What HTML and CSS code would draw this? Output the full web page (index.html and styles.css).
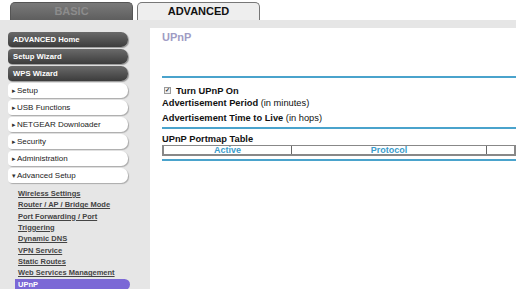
FILE: index.html
```html
<!DOCTYPE html>
<html>
<head>
<meta charset="utf-8">
<link rel="stylesheet" href="styles.css">
</head>
<body>
<div class="tabs">
  <div class="tab tab-basic">BASIC</div>
  <div class="tab tab-adv">ADVANCED</div>
</div>
<div class="main">
  <nav class="side">
    <div class="btn dark">ADVANCED Home</div>
    <div class="btn dark">Setup Wizard</div>
    <div class="btn dark">WPS Wizard</div>
    <div class="btn light"><span class="arr">&#9656;</span>Setup</div>
    <div class="btn light"><span class="arr">&#9656;</span>USB Functions</div>
    <div class="btn light"><span class="arr">&#9656;</span>NETGEAR Downloader</div>
    <div class="btn light"><span class="arr">&#9656;</span>Security</div>
    <div class="btn light"><span class="arr">&#9656;</span>Administration</div>
    <div class="btn light"><span class="arr">&#9662;</span>Advanced Setup</div>
    <ul class="sub">
      <li><a>Wireless Settings</a></li>
      <li><a>Router / AP / Bridge Mode</a></li>
      <li><a>Port Forwarding / Port Triggering</a></li>
      <li><a>Dynamic DNS</a></li>
      <li><a>VPN Service</a></li>
      <li><a>Static Routes</a></li>
      <li><a>Web Services Management</a></li>
      <li class="cur"><a>UPnP</a></li>
    </ul>
  </nav>
  <section class="content">
    <h1 class="title">UPnP</h1>
    <div class="rule first"></div>
    <div class="row check"><span class="cb">&#10003;</span><b>Turn UPnP On</b></div>
    <div class="row r1"><b>Advertisement Period</b> (in minutes)</div>
    <div class="row r2"><b>Advertisement Time to Live</b> (in hops)</div>
    <div class="rule r-second"></div>
    <div class="row tbl-title"><b>UPnP Portmap Table</b></div>
    <div class="tbl">
      <div class="c c1">Active</div>
      <div class="c c2">Protocol</div>
      <div class="c c3"></div>
    </div>
    <div class="rule"></div>
  </section>
</div>
</body>
</html>
```
FILE: styles.css
```css
* { box-sizing: border-box; }
html, body { margin: 0; padding: 0; background: #fff; }
body { font-family: "Liberation Sans", Arial, sans-serif; font-size: 9px; color: #111; width: 516px; height: 289px; overflow: hidden; }

.tabs { display: flex; gap: 4px; padding: 2px 0 0 10px; height: 20px; }
.tab { width: 123px; height: 18px; border-radius: 5px 5px 0 0; text-align: center; font-weight: bold; font-size: 11px; line-height: 17px; }
.tab-basic { background: linear-gradient(#7a7a7a, #5e5e5e); color: #8c8c8c; border: 1px solid #555; border-bottom: 0; }
.tab-adv { background: #eeeeee; color: #111; border: 1px solid #777; border-bottom: 0; }

.main { display: grid; grid-template-columns: 150px 1fr; background: #e6e6e6; padding-top: 8px; height: 269px; }

.side { padding: 4px 0 0 8px; }
.btn { width: 120px; height: 15px; margin-bottom: 2px; border-radius: 4px 7px 7px 4px; line-height: 15px; padding-left: 5px; white-space: nowrap; }
.btn.dark { background: linear-gradient(#6a6a6a, #3c3c3c); color: #fff; font-weight: bold; font-size: 7.7px; box-shadow: 1px 1px 1px rgba(0,0,0,.35); }
.btn.light { background: #fff; color: #222; font-size: 8px; box-shadow: 1px 1px 1px #aaa; padding-left: 4px; }
.arr { font-size: 7px; margin-right: 1px; color: #333; }

.sub { list-style: none; margin: 5px 0 0 0; padding: 0; font-size: 7.5px; font-weight: bold; }
.sub li { padding-left: 10px; width: 122px; line-height: 11px; margin-bottom: 0.4px; }
.sub a { color: #444; text-decoration: underline; }
.sub li.cur { background: #7b68d6; border-radius: 0 6px 6px 0; margin-left: 7px; padding-left: 3px; width: 115px; }
.sub li.cur a { color: #fff; text-decoration: none; }

.content { background: #fff; padding-left: 12px; }
.title { margin: 3px 0 0 0; font-size: 11px; color: #a09cc4; font-weight: bold; line-height: 13px; }
.rule { height: 2px; background: #4aa3cc; }
.rule.first { margin-top: 32px; }
.row { font-size: 9.3px; }
.check { display: flex; align-items: center; margin-top: 7px; height: 11px; }
.cb { width: 7px; height: 7px; border: 1px solid #9a9a9a; background: #eee; margin: 0 5px 0 2px; font-size: 6px; line-height: 5px; text-align: center; color: #333; font-weight: bold; }
.r1 { height: 13px; line-height: 13px; margin-top: 1px; }
.r2 { height: 15px; line-height: 17px; }
.r-second { margin-top: 2px; }
.tbl-title { margin-top: 4px; height: 12px; line-height: 12px; }
.tbl { display: flex; border: 1px solid #888; border-width: 1px 2px 2px 2px; height: 11px; margin-bottom: 3px; }
.c { color: #3a9ccc; font-weight: bold; text-align: center; line-height: 9px; font-size: 9px; overflow: hidden; }
.c1 { width: 128px; border-right: 1px solid #666; }
.c2 { width: 195px; border-right: 1px solid #666; }
.c3 { flex: 1; }
```
